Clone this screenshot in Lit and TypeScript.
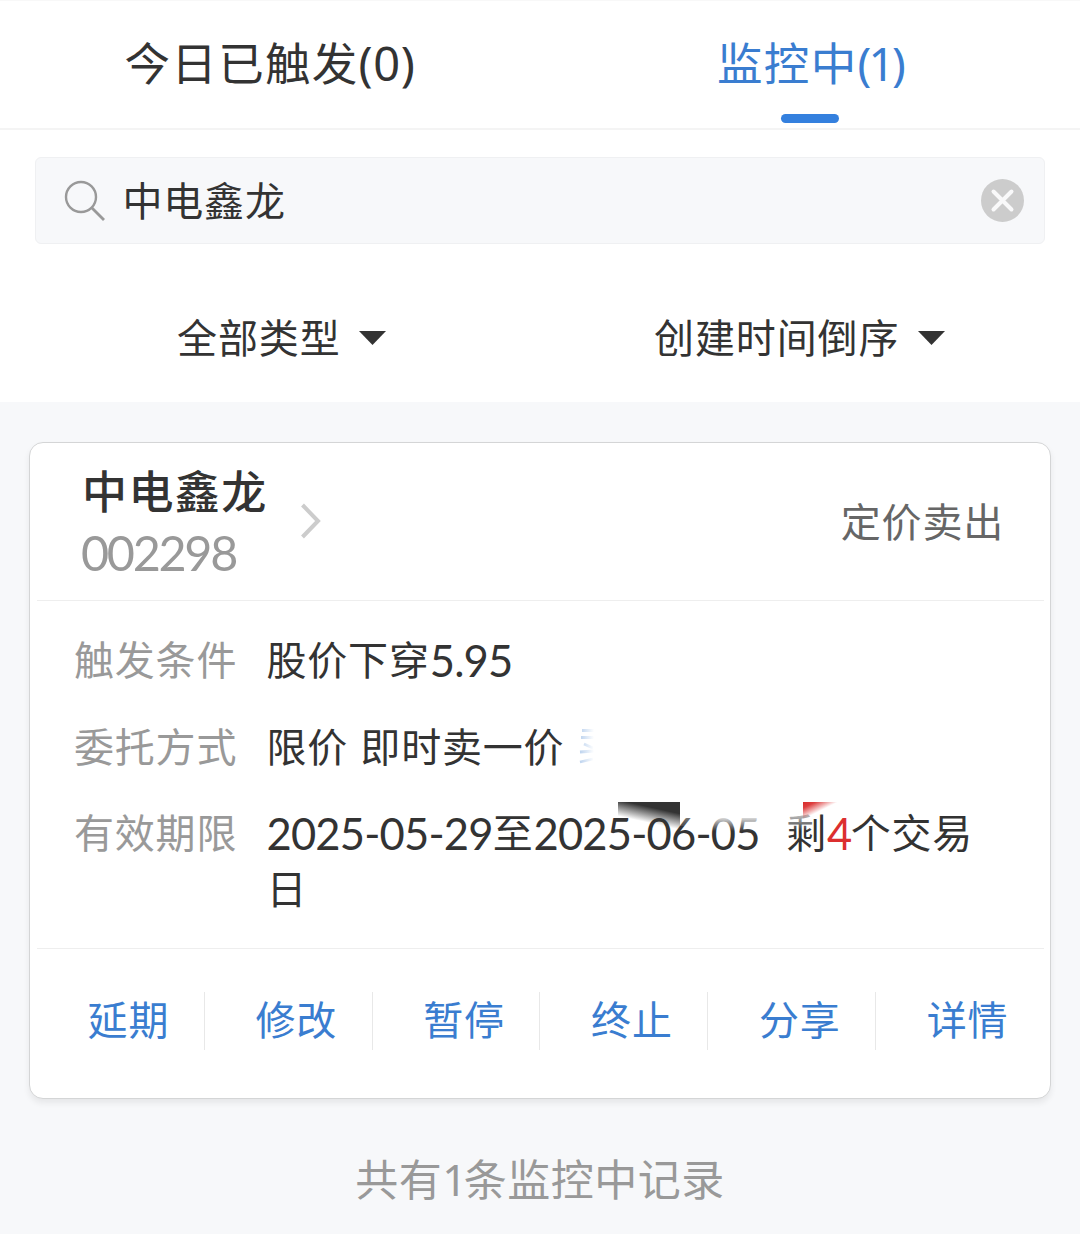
import { LitElement, html, css, svg } from "lit";
import { customElement, property } from "lit/decorators.js";

const ACTIONS = ["延期", "修改", "暂停", "终止", "分享", "详情"];

@customElement("order-card")
class OrderCard extends LitElement {
  @property() name = "中电鑫龙";
  @property() code = "002298";

  static styles = css`
    :host { display: block; }
    .card {
      box-sizing: border-box;
      height: 657px;
      padding: 0 6px 0 7px;
      background: #fff;
      border: 1px solid #d4d5d6;
      border-radius: 14px;
      box-shadow: 0 4px 6px rgba(0, 0, 0, 0.07);
      display: flex;
      flex-direction: column;
    }
    .head {
      box-sizing: border-box;
      height: 158px;
      padding: 0 40px 0 45px;
      display: flex;
      align-items: center;
      border-bottom: 1px solid #eee;
    }
    .stock { width: 219px; }
    .name {
      font-size: 45px;
      letter-spacing: 1.4px;
      line-height: 57px;
      font-weight: 500;
      color: #333;
    }
    .code {
      font-family: Lato, "Liberation Sans", sans-serif;
      font-size: 48.5px;
      letter-spacing: -2.3px;
      line-height: 60px;
      padding-top: 4px;
      margin-left: -1px;
      color: #999;
    }
    .chevron { display: block; width: 20px; height: 36px; margin-bottom: 2px; }
    .type { margin-left: auto; color: #666; padding-bottom: 4px; }
    .type, .row, .action { font-size: 40px; letter-spacing: 0.8px; }
    .rows {
      box-sizing: border-box;
      height: 348px;
      padding: 30px 60px 0 37px;
      border-bottom: 1px solid #eee;
      display: flex;
      flex-direction: column;
      gap: 31px;
    }
    .row { display: flex; line-height: 55.5px; }
    .label { width: 192.5px; flex: none; color: #999; }
    .value { position: relative; color: #333; flex: 1; word-spacing: 2.5px; }
    .num {
      font-family: Lato, "Liberation Sans", sans-serif;
      font-size: 43.5px;
      letter-spacing: -0.8px;
      line-height: 1;
      vertical-align: -1.5px;
    }
    .left { margin-left: 26.5px; }
    .red { color: #dc2f2f; letter-spacing: -1.5px; }
    .smudge, .trace { position: absolute; display: block; }
    .smudge { left: 350.5px; top: -4px; width: 240px; height: 34px; }
    .trace { left: 311px; top: 8px; width: 20px; height: 40px; }
    .actions {
      display: grid;
      grid-template-columns: repeat(6, 1fr);
      grid-template-rows: 58px;
      height: 58px;
      margin-top: 43px;
    }
    .action {
      box-sizing: border-box;
      display: flex;
      align-items: center;
      justify-content: center;
      height: 58px;
      line-height: 52px;
      padding: 0 0 6px 16px;
      color: #3a7dd0;
      border-right: 1px solid #e8e8e8;
    }
    .action:last-child { border-right-color: transparent; }
  `;

  private trace() {
    return svg`<svg class="trace" viewBox="0 0 20 40">
      <defs><linearGradient id="t" x1="0" x2="16" y1="0" y2="0" gradientUnits="userSpaceOnUse">
        <stop offset="0" stop-color="#b4cdec"/><stop offset="1" stop-color="#fff"/></linearGradient></defs>
      <path d="M4 4.500H17M3 11.500H17M6 18L15 22M2 26L16 25M2 36L15 33" fill="none" stroke="url(#t)" stroke-width="2.800"/>
    </svg>`;
  }

  private smudge() {
    return svg`<svg class="smudge" viewBox="0 0 240 34">
      <defs>
        <linearGradient id="k" x1="32" y1="4" x2="28" y2="22" gradientUnits="userSpaceOnUse">
          <stop offset="0" stop-color="#333"/><stop offset=".15" stop-color="#333"/><stop offset="1" stop-color="#333" stop-opacity="0"/></linearGradient>
        <linearGradient id="r" x1="186" y1="2" x2="193" y2="16" gradientUnits="userSpaceOnUse">
          <stop offset="0" stop-color="#d92a2a"/><stop offset=".35" stop-color="#d92a2a" stop-opacity=".9"/><stop offset="1" stop-color="#d92a2a" stop-opacity="0"/></linearGradient>
        <linearGradient id="w" x1="0" y1="14" x2="0" y2="31" gradientUnits="userSpaceOnUse">
          <stop offset="0" stop-color="#fff"/><stop offset=".2" stop-color="#fff" stop-opacity=".85"/><stop offset="1" stop-color="#fff" stop-opacity="0"/></linearGradient>
      </defs>
      <path d="M90 8H146V32H90Z" fill="url(#w)"/>
      <path d="M63 8H90V26H63Z" fill="url(#w)" opacity=".4"/>
      <path d="M168 8H196V32H168Z" fill="url(#w)" opacity=".7"/>
      <path d="M1 2H63V32H1Z" fill="url(#k)"/>
      <path d="M186 2H224V26H186Z" fill="url(#r)"/>
    </svg>`;
  }

  render() {
    return html`
      <div class="card">
        <div class="head">
          <div class="stock">
            <div class="name">${this.name}</div>
            <div class="code">${this.code}</div>
          </div>
          <svg class="chevron" viewBox="0 0 20 36"><path d="M1.500 2L17 18L1.500 34" fill="none" stroke="#ccc" stroke-width="4"/></svg>
          <div class="type">定价卖出</div>
        </div>
        <div class="rows">
          <div class="row">
            <div class="label">触发条件</div>
            <div class="value">股价下穿<span class="num">5.95</span></div>
          </div>
          <div class="row">
            <div class="label">委托方式</div>
            <div class="value">限价 即时卖一价${this.trace()}</div>
          </div>
          <div class="row">
            <div class="label">有效期限</div>
            <div class="value"><span class="num">2025-05-29</span>至<span class="num">2025-06-05</span><span class="left">剩</span><span class="num red">4</span>个交易日${this.smudge()}</div>
          </div>
        </div>
        <div class="actions">
          ${ACTIONS.map((a) => html`<div class="action">${a}</div>`)}
        </div>
      </div>
    `;
  }
}

@customElement("app-root")
class AppRoot extends LitElement {
  static styles = css`
    :host {
      display: flex;
      flex-direction: column;
      width: 1080px;
      height: 1234px;
      overflow: hidden;
      background: #f7f8fa;
      color: #333;
      font-family: "Noto Sans CJK SC", sans-serif;
    }
    .top { height: 402px; background: #fff; display: flex; flex-direction: column; }
    .tabs {
      box-sizing: border-box;
      height: 130px;
      display: grid;
      grid-template-columns: 1fr 1fr;
      border-top: 1px solid #f8f8f8;
      border-bottom: 2px solid #f4f4f4;
    }
    .tab {
      display: flex;
      flex-direction: column;
      align-items: center;
      font-size: 45.5px;
      letter-spacing: 1.3px;
      line-height: 64px;
      padding-top: 28px;
    }
    .paren { font-family: "Noto Sans", sans-serif; font-size: 47px; letter-spacing: 0.6px; line-height: 1; }
    .active { color: #3a7dd0; }
    .active .paren { font-size: 46px; letter-spacing: -2.8px; }
    .bar { width: 58px; height: 9px; margin-top: 21px; border-radius: 5px; background: #3480de; }
    .search {
      box-sizing: border-box;
      height: 87px;
      margin: 27px 35px 0;
      padding: 0 20px 0 28px;
      display: flex;
      align-items: center;
      background: #f7f8fa;
      border: 1px solid #eff0f2;
      border-radius: 6px;
      font-size: 40px;
      letter-spacing: 0.8px;
    }
    .query { padding-bottom: 4px; }
    .lens { width: 42px; height: 42px; margin-right: 16.5px; }
    .clear { width: 43px; height: 43px; margin-left: auto; }
    .filters { flex: 1; display: flex; font-size: 40px; letter-spacing: 0.9px; line-height: 60px; padding-top: 64px; }
    .filter { display: flex; gap: 18.5px; align-items: center; height: 60px; }
    .filter span { padding-bottom: 5px; }
    .first { width: 477px; margin-left: 177px; }
    .tri { width: 27px; height: 14px; }
    .list { padding: 40px 29px 0; }
    .footer { margin-top: 46px; text-align: center; font-size: 43px; letter-spacing: 0.5px; line-height: 64px; color: #999; }
    .one { font-family: "Noto Sans", sans-serif; letter-spacing: -3px; line-height: 1; }
  `;

  private filter(text: string, cls = "") {
    return html`<div class="filter ${cls}"><span>${text}</span>
      <svg class="tri" viewBox="0 0 27 14"><path d="M0 0H27L13.500 14Z" fill="#333"/></svg></div>`;
  }

  render() {
    return html`
      <div class="top">
        <div class="tabs">
          <div class="tab"><span>今日已触发<span class="paren">(0)</span></span></div>
          <div class="tab active"><span>监控中<span class="paren">(1)</span></span><div class="bar"></div></div>
        </div>
        <div class="search">
          <svg class="lens" viewBox="0 0 42 42"><circle cx="17" cy="17" r="15" fill="none" stroke="#999" stroke-width="2.400"/><path d="M27.500 27.500L40 40" stroke="#999" stroke-width="2.800"/></svg>
          <span class="query">中电鑫龙</span>
          <svg class="clear" viewBox="0 0 43 43"><circle cx="21.500" cy="21.500" r="21.500" fill="#ccc"/><path d="M12.500 12.500L30.500 30.500M30.500 12.500L12.500 30.500" stroke="#f9f9fa" stroke-width="4" stroke-linecap="round"/></svg>
        </div>
        <div class="filters">${this.filter("全部类型", "first")}${this.filter("创建时间倒序")}</div>
      </div>
      <div class="list">
        <order-card></order-card>
        <div class="footer">共有<span class="one">1</span>条监控中记录</div>
      </div>
    `;
  }
}
